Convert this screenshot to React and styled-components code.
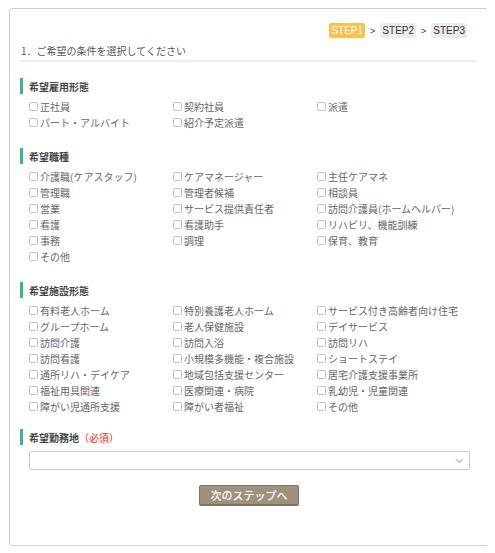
import React from 'react';
import styled, { createGlobalStyle } from 'styled-components';

const GlobalStyle = createGlobalStyle`
  body {
    margin: 8px;
    background: #fff;
    font-family: "Noto Sans CJK JP", "Noto Sans", sans-serif;
  }
`;

const Card = styled.div`
  box-sizing: border-box;
  width: 480px;
  margin-left: 1px;
  border: 1px solid #cfcfcf;
  border-radius: 3px;
  padding: 14px 10px 39px 10px;
`;

const Steps = styled.div`
  display: flex;
  justify-content: flex-end;
  align-items: center;
  padding-right: 11px;
  height: 15px;
`;

const Step = styled.span`
  font-family: "Liberation Sans", Arial, sans-serif;
  font-size: 10px;
  line-height: 15px;
  padding: 0 2px;
  border-radius: 2px;
  background: ${p => (p.active ? '#f6c14d' : '#ececec')};
  color: ${p => (p.active ? '#fff' : '#333')};
`;

const Sep = styled.span`
  font-family: "Liberation Sans", Arial, sans-serif;
  font-size: 9px;
  color: #333;
  margin: 0 5px 0 5px;
`;

const Lead = styled.div`
  font-size: 10px;
  line-height: 14px;
  color: #555;
  padding: 6px 0 0 1px;
  height: 16px;
  border-bottom: 2px solid #eeeeee;
`;

const Section = styled.div`
  margin-top: ${p => p.top}px;
`;

const Heading = styled.div`
  display: flex;
  align-items: center;
  height: 16px;
  border-left: 3px solid #3fb293;
  padding-left: 6px;
  font-size: 10px;
  font-weight: bold;
  color: #444;
`;

const Required = styled.span`
  color: #f22;
  font-weight: normal;
`;

const Grid = styled.div`
  display: grid;
  grid-template-columns: repeat(3, 144px);
  grid-auto-rows: 16px;
  padding: 4px 0 0 9px;
`;

const Item = styled.label`
  display: flex;
  align-items: center;
  font-size: 10px;
  color: #666;
  white-space: nowrap;
`;

const Box = styled.span`
  box-sizing: border-box;
  width: 9px;
  height: 9px;
  border: 1px solid #c4c4c4;
  border-radius: 2px;
  margin-right: 2px;
  flex-shrink: 0;
`;

const Select = styled.div`
  box-sizing: border-box;
  display: flex;
  justify-content: flex-end;
  align-items: center;
  margin: 6px 0 0 9px;
  width: 441px;
  height: 19px;
  border: 1px solid #cccccc;
  border-radius: 2px;
  padding-right: 5px;
`;

const ButtonRow = styled.div`
  display: flex;
  justify-content: center;
  padding-top: 15px;
`;

const Button = styled.button`
  box-sizing: border-box;
  width: 100px;
  height: 21px;
  background: #9e917d;
  border: 1px solid #807361;
  border-bottom-width: 2px;
  border-radius: 2px;
  color: #fff;
  font-family: "Noto Sans CJK JP", sans-serif;
  font-size: 11px;
  font-weight: 500;
  padding: 0;
`;

const sections = [
  {
    title: '希望雇用形態',
    top: 16,
    items: ['正社員', '契約社員', '派遣', 'パート・アルバイト', '紹介予定派遣'],
  },
  {
    title: '希望職種',
    top: 18,
    items: [
      '介護職(ケアスタッフ)', 'ケアマネージャー', '主任ケアマネ',
      '管理職', '管理者候補', '相談員',
      '営業', 'サービス提供責任者', '訪問介護員(ホームヘルパー)',
      '看護', '看護助手', 'リハビリ、機能訓練',
      '事務', '調理', '保育、教育',
      'その他',
    ],
  },
  {
    title: '希望施設形態',
    top: 18,
    items: [
      '有料老人ホーム', '特別養護老人ホーム', 'サービス付き高齢者向け住宅',
      'グループホーム', '老人保健施設', 'デイサービス',
      '訪問介護', '訪問入浴', '訪問リハ',
      '訪問看護', '小規模多機能・複合施設', 'ショートステイ',
      '通所リハ・デイケア', '地域包括支援センター', '居宅介護支援事業所',
      '福祉用具関連', '医療関連・病院', '乳幼児・児童関連',
      '障がい児通所支援', '障がい者福祉', 'その他',
    ],
  },
];

const Chevron = () => (
  <svg width="9" height="6" viewBox="0 0 9 6">
    <path d="M1 1 L4.5 4.5 L8 1" fill="none" stroke="#bdbdbd" strokeWidth="1.3" />
  </svg>
);

export default function App() {
  return (
    <>
      <GlobalStyle />
      <Card>
        <Steps>
          <Step active>STEP1</Step>
          <Sep>&gt;</Sep>
          <Step>STEP2</Step>
          <Sep>&gt;</Sep>
          <Step>STEP3</Step>
        </Steps>
        <Lead>1．ご希望の条件を選択してください</Lead>
        {sections.map(s => (
          <Section key={s.title} top={s.top}>
            <Heading>{s.title}</Heading>
            <Grid>
              {s.items.map((it, i) => (
                <Item key={i}>
                  <Box />
                  {it}
                </Item>
              ))}
            </Grid>
          </Section>
        ))}
        <Section top={15}>
          <Heading>
            希望勤務地<Required>（必須）</Required>
          </Heading>
          <Select>
            <Chevron />
          </Select>
        </Section>
        <ButtonRow>
          <Button>次のステップへ</Button>
        </ButtonRow>
      </Card>
    </>
  );
}
